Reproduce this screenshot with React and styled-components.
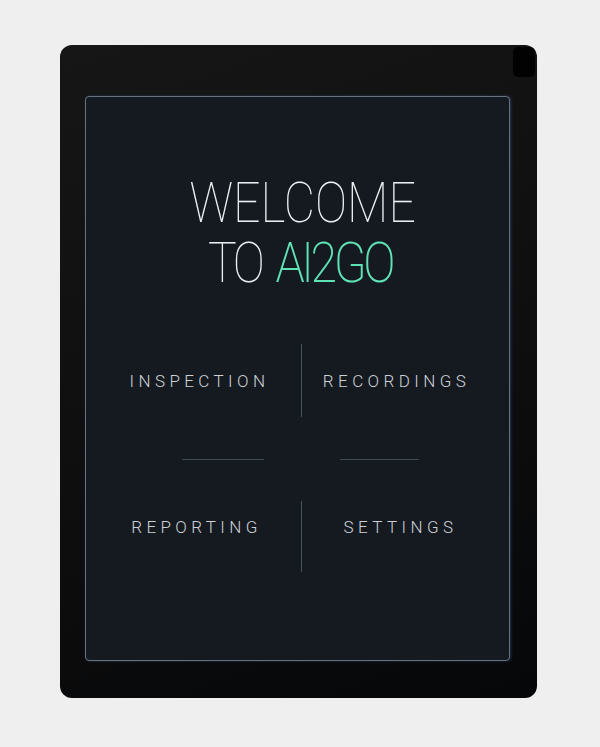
import React from "react";
import styled, { createGlobalStyle } from "styled-components";

const GlobalStyle = createGlobalStyle`
  html, body {
    margin: 0;
    padding: 0;
    background: #efefef;
  }
  body {
    font-family: Roboto, "Liberation Sans", sans-serif;
  }
`;

const Page = styled.div`
  width: 600px;
  height: 747px;
  box-sizing: border-box;
  padding: 45px 0 0 60px;
`;

const Tablet = styled.div`
  position: relative;
  width: 477px;
  height: 653px;
  box-sizing: border-box;
  padding: 51px 27px 37px 25px;
  border-radius: 12px;
  background: linear-gradient(160deg, #161616 0%, #0e0e0f 55%, #060708 100%);
`;

const Camera = styled.div`
  position: absolute;
  top: 2px;
  right: 2px;
  width: 22px;
  height: 30px;
  border-radius: 5px;
  background: #020202;
`;

const Screen = styled.div`
  height: 100%;
  box-sizing: border-box;
  border: 1.5px solid #66737e;
  border-radius: 4px;
  background: #151a21;
  box-shadow: 1px 0 3px rgba(70, 100, 170, 0.45);
  padding-top: 76px;
  display: flex;
  flex-direction: column;
  align-items: stretch;
`;

const Title = styled.h1`
  margin: 0;
  font-weight: 100;
  font-size: 56px;
  line-height: 60px;
  text-align: center;
  color: #eceff1;
`;

const TitleLine = styled.span`
  display: block;
  padding-left: ${(p) => p.$shift || 0}px;
  letter-spacing: ${(p) => p.$tight || 0}px;
  word-spacing: ${(p) => p.$word || 0}px;
  transform: scaleX(0.86);
`;

const Accent = styled.span`
  color: #5fe3b4;
  font-weight: 200;
`;

const Menu = styled.div`
  margin-top: 51px;
  display: grid;
  grid-template-columns: 215px 1px 1fr;
  grid-template-rows: 73px 84px 71px;
`;

const Cell = styled.div`
  display: flex;
  align-items: center;
  justify-content: center;
  padding-bottom: ${(p) => (p.$raised ? "20px" : "0")};
  padding-left: ${(p) => (p.$shift > 0 ? p.$shift : 0)}px;
  padding-right: ${(p) => (p.$shift < 0 ? -p.$shift : 0)}px;
`;

const Label = styled.span`
  font-size: 17px;
  font-weight: 300;
  letter-spacing: 4.4px;
  color: #cdd1d5;
`;

const VDivider = styled.div`
  background: #46525c;
`;

const LineCell = styled.div`
  display: flex;
  align-items: center;
  justify-content: ${(p) => (p.$side === "left" ? "flex-end" : "flex-start")};
  padding: ${(p) => (p.$side === "left" ? "0 37px 0 0" : "0 0 0 38px")};
`;

const HLine = styled.div`
  width: ${(p) => p.$w}px;
  height: 1px;
  background: #3f4b54;
`;

export default function App() {
  return (
    <>
      <GlobalStyle />
      <Page>
        <Tablet>
          <Camera />
          <Screen>
            <Title>
              <TitleLine $shift={12}>WELCOME</TitleLine>
              <TitleLine $shift={6} $tight={-4} $word={7}>
                TO <Accent>AI2GO</Accent>
              </TitleLine>
            </Title>
            <Menu>
              <Cell $shift={12}>
                <Label>INSPECTION</Label>
              </Cell>
              <VDivider />
              <Cell $shift={-18}>
                <Label>RECORDINGS</Label>
              </Cell>

              <LineCell $side="left">
                <HLine $w={82} />
              </LineCell>
              <div />
              <LineCell $side="right">
                <HLine $w={79} />
              </LineCell>

              <Cell $raised $shift={6}>
                <Label>REPORTING</Label>
              </Cell>
              <VDivider />
              <Cell $raised $shift={-10}>
                <Label>SETTINGS</Label>
              </Cell>
            </Menu>
          </Screen>
        </Tablet>
      </Page>
    </>
  );
}
